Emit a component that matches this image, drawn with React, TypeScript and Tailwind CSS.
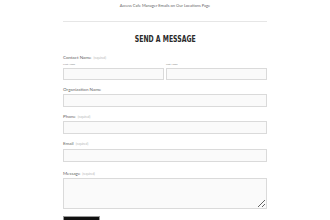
import React from "react";

function Label({ text, req = true }: { text: string; req?: boolean }) {
  return (
    <div className="h-[5px] text-[4.5px] leading-[5px] text-[#666] whitespace-nowrap">
      {text}
      {req && <span className="ml-[2px] text-[3px] text-[#b5b5b5]">(required)</span>}
    </div>
  );
}

function Input({ className = "" }: { className?: string }) {
  return <div className={"border border-[#dadada] bg-[#fafafa] " + className} />;
}

export default function App() {
  return (
    <div className="w-[330px] h-[220px] overflow-hidden bg-white font-['Lato',sans-serif]">
      <p className="pt-[3px] text-center text-[4px] leading-[5px] text-[#666]">
        Access Cafe Manager Emails on Our Locations Page
      </p>
      <div className="mx-auto w-[204px]">
        <div className="mt-[13px] h-px bg-[#e6e6e6]" />
        <h2 className="mt-[12px] text-center text-[9.5px] leading-[10px] font-bold text-[#2a2a2a] font-['DejaVu_Sans_Condensed','DejaVu_Sans',sans-serif]">
          <span className="inline-block scale-x-[0.72]">SEND A MESSAGE</span>
        </h2>
        <div className="mt-[11px]">
          <Label text="Contact Name" />
        </div>
        <div className="mt-[3px] flex gap-[2px]">
          <div className="flex-1">
            <div className="h-[3px] text-[2.5px] leading-[3px] text-[#888]">First Name</div>
            <Input className="mt-[2px] h-[12px]" />
          </div>
          <div className="flex-1">
            <div className="h-[3px] text-[2.5px] leading-[3px] text-[#888]">Last Name</div>
            <Input className="mt-[2px] h-[12px]" />
          </div>
        </div>
        <div className="mt-[7px]">
          <Label text="Organization Name" req={false} />
        </div>
        <Input className="mt-[2px] h-[13px]" />
        <div className="mt-[7px]">
          <Label text="Phone" />
        </div>
        <Input className="mt-[2px] h-[13px]" />
        <div className="mt-[7px]">
          <Label text="Email" />
        </div>
        <Input className="mt-[3px] h-[13px]" />
        <div className="mt-[9px]">
          <Label text="Message" />
        </div>
        <textarea className="mt-[2px] block h-[31px] w-full border border-[#dadada] bg-[#fafafa] outline-none" />
        <div className="mt-[7px] h-[14px] w-[37px] border border-[#999] bg-[#111]" />
      </div>
    </div>
  );
}
